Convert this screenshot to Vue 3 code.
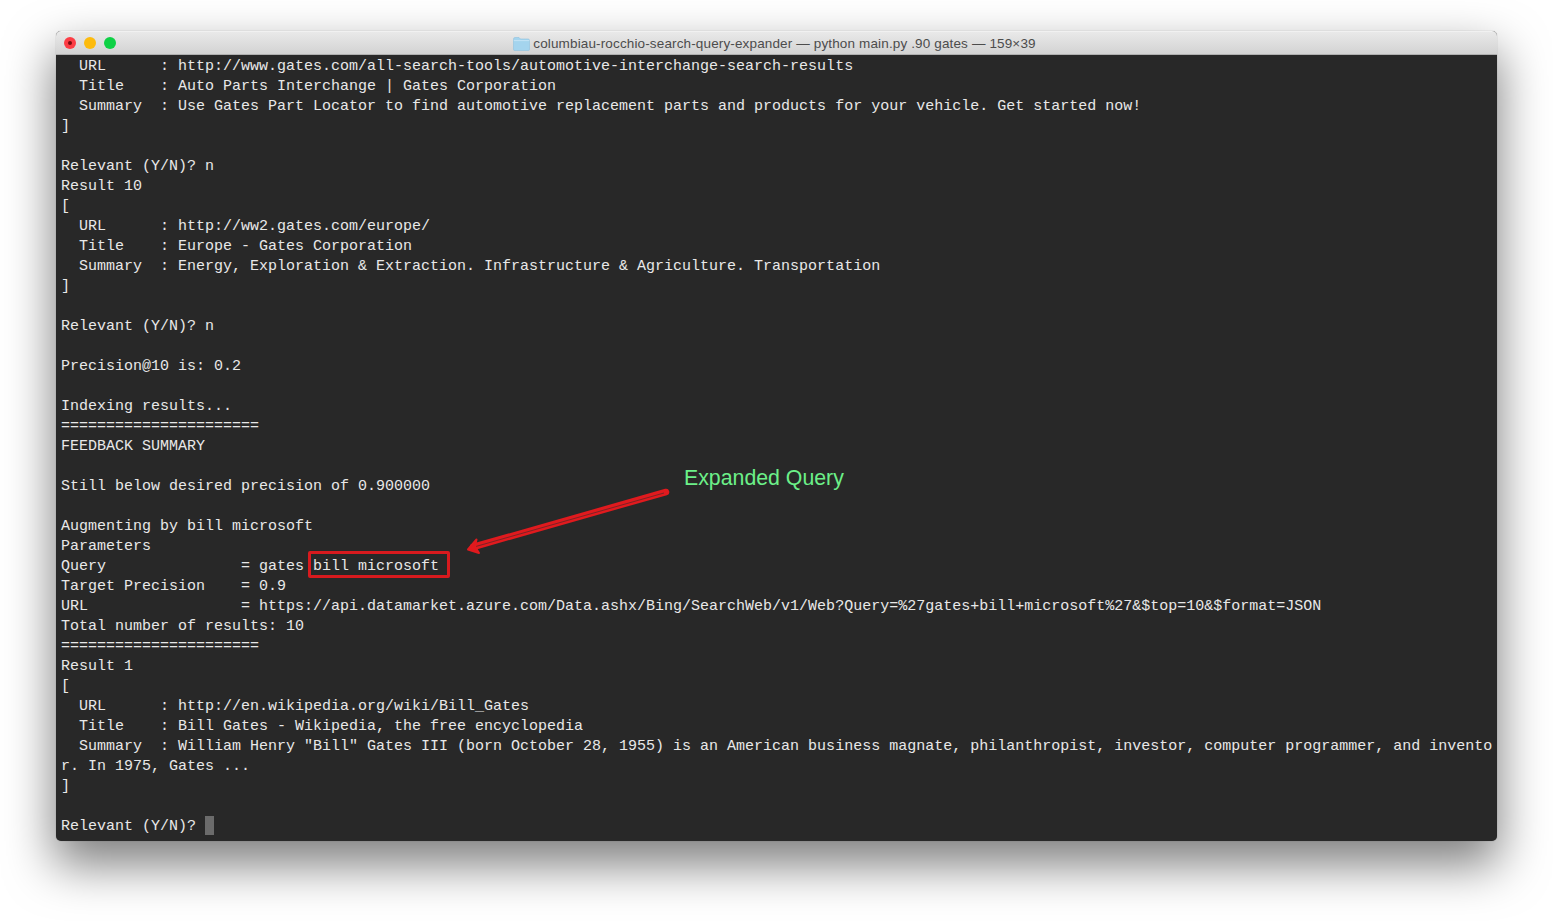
<script setup>
const lines = [
  '  URL      : http://www.gates.com/all-search-tools/automotive-interchange-search-results',
  '  Title    : Auto Parts Interchange | Gates Corporation',
  '  Summary  : Use Gates Part Locator to find automotive replacement parts and products for your vehicle. Get started now!',
  ']',
  '',
  'Relevant (Y/N)? n',
  'Result 10',
  '[',
  '  URL      : http://ww2.gates.com/europe/',
  '  Title    : Europe - Gates Corporation',
  '  Summary  : Energy, Exploration & Extraction. Infrastructure & Agriculture. Transportation',
  ']',
  '',
  'Relevant (Y/N)? n',
  '',
  'Precision@10 is: 0.2',
  '',
  'Indexing results...',
  '======================',
  'FEEDBACK SUMMARY',
  '',
  'Still below desired precision of 0.900000',
  '',
  'Augmenting by bill microsoft',
  'Parameters',
  'Query               = gates bill microsoft',
  'Target Precision    = 0.9',
  'URL                 = https://api.datamarket.azure.com/Data.ashx/Bing/SearchWeb/v1/Web?Query=%27gates+bill+microsoft%27&$top=10&$format=JSON',
  'Total number of results: 10',
  '======================',
  'Result 1',
  '[',
  '  URL      : http://en.wikipedia.org/wiki/Bill_Gates',
  '  Title    : Bill Gates - Wikipedia, the free encyclopedia',
  '  Summary  : William Henry "Bill" Gates III (born October 28, 1955) is an American business magnate, philanthropist, investor, computer programmer, and invento',
  'r. In 1975, Gates ...',
  ']',
  '',
]
</script>

<template>
  <div class="page">
    <div class="window">
      <header class="titlebar">
        <div class="lights">
          <span class="light red"><i></i></span>
          <span class="light yellow"></span>
          <span class="light green"></span>
        </div>
        <div class="title">
          <svg class="folder" width="17" height="14" viewBox="0 0 17 14">
            <path d="M0.5 2.2 Q0.5 0.5 2 0.5 H6 L7.5 2 H15 Q16.5 2 16.5 3.5 V12.5 Q16.5 13.5 15 13.5 H2 Q0.5 13.5 0.5 12.5 Z" fill="#a4d4ee" stroke="#8fc3e0" stroke-width="0.6"/>
            <path d="M0.8 3.6 H16.2" stroke="#c4e4f5" stroke-width="1"/>
          </svg>
          <span>columbiau-rocchio-search-query-expander — python main.py .90 gates — 159×39</span>
        </div>
      </header>
      <main class="terminal">
        <div v-for="(line, i) in lines" :key="i" class="row">{{ line }}</div>
        <div class="row">Relevant (Y/N)? <span class="cursor"></span></div>
      </main>

      <div class="callout">Expanded Query</div>
      <div class="highlight"></div>
      <svg class="arrow" width="220" height="75" viewBox="0 0 220 75">
        <path d="M209 7 L16 62" stroke="#e01a1e" stroke-width="6.5" stroke-linecap="round" fill="none"/>
        <path d="M207 8 L17 62" stroke="#7c2326" stroke-width="1" fill="none"/>
        <path d="M11 64.5 L19.5 54.5 L18 61.5 L22 68 Z" fill="#e01a1e" stroke="#e01a1e" stroke-width="2" stroke-linejoin="round"/>
      </svg>
    </div>
  </div>
</template>

<style scoped>
.page {
  box-sizing: border-box;
  width: 1553px;
  height: 921px;
  padding: 31px 56px 0;
  background: #fff;
}
.window {
  position: relative;
  height: 810px;
  border-radius: 5px;
  background: #282828;
  box-shadow: 0 22px 48px 2px rgba(0, 0, 0, 0.5), 0 0 1px rgba(0, 0, 0, 0.4);
}
.titlebar {
  position: relative;
  box-sizing: border-box;
  height: 24px;
  display: flex;
  align-items: center;
  justify-content: center;
  border-radius: 5px 5px 0 0;
  border-top: 1px solid #f1f1f1;
  border-bottom: 1px solid #b0b0b0;
  background: linear-gradient(#e9e9e9, #d3d3d3);
}
.lights {
  position: absolute;
  left: 8px;
  top: 5px;
  display: flex;
  gap: 8px;
}
.light {
  width: 12px;
  height: 12px;
  border-radius: 50%;
  display: flex;
  align-items: center;
  justify-content: center;
}
.light i {
  width: 4px;
  height: 4px;
  border-radius: 50%;
  background: #7a0c10;
}
.red { background: #fc3d45; }
.yellow { background: #fdbb0d; }
.green { background: #0ed145; }
.title {
  display: flex;
  align-items: center;
  gap: 3px;
  margin-left: -4px;
  padding-top: 1px;
  font: 13.5px/1 "Liberation Sans", Arial, sans-serif;
  letter-spacing: 0.14px;
  color: #4c4c4c;
  white-space: nowrap;
}
.terminal {
  padding: 2px 0 0 5px;
  font: 15px/20px "Liberation Mono", "DejaVu Sans Mono", monospace;
  color: #e8e8e8;
}
.row {
  height: 20px;
  white-space: pre;
}
.cursor {
  display: inline-block;
  width: 9px;
  height: 19px;
  margin-top: -1px;
  vertical-align: top;
  background: #6b6b6b;
}
.callout {
  position: absolute;
  left: 628px;
  top: 433px;
  font: 21.3px/28px "Liberation Sans", Arial, sans-serif;
  color: #6cf088;
  white-space: nowrap;
}
.highlight {
  position: absolute;
  left: 252px;
  top: 520px;
  width: 142px;
  height: 27px;
  box-sizing: border-box;
  border: 3px solid #d81a1e;
  border-radius: 2px;
}
.arrow {
  position: absolute;
  left: 401px;
  top: 454px;
}
</style>

<style>
html, body {
  margin: 0;
  overflow: hidden;
  background: #fff;
}
</style>
